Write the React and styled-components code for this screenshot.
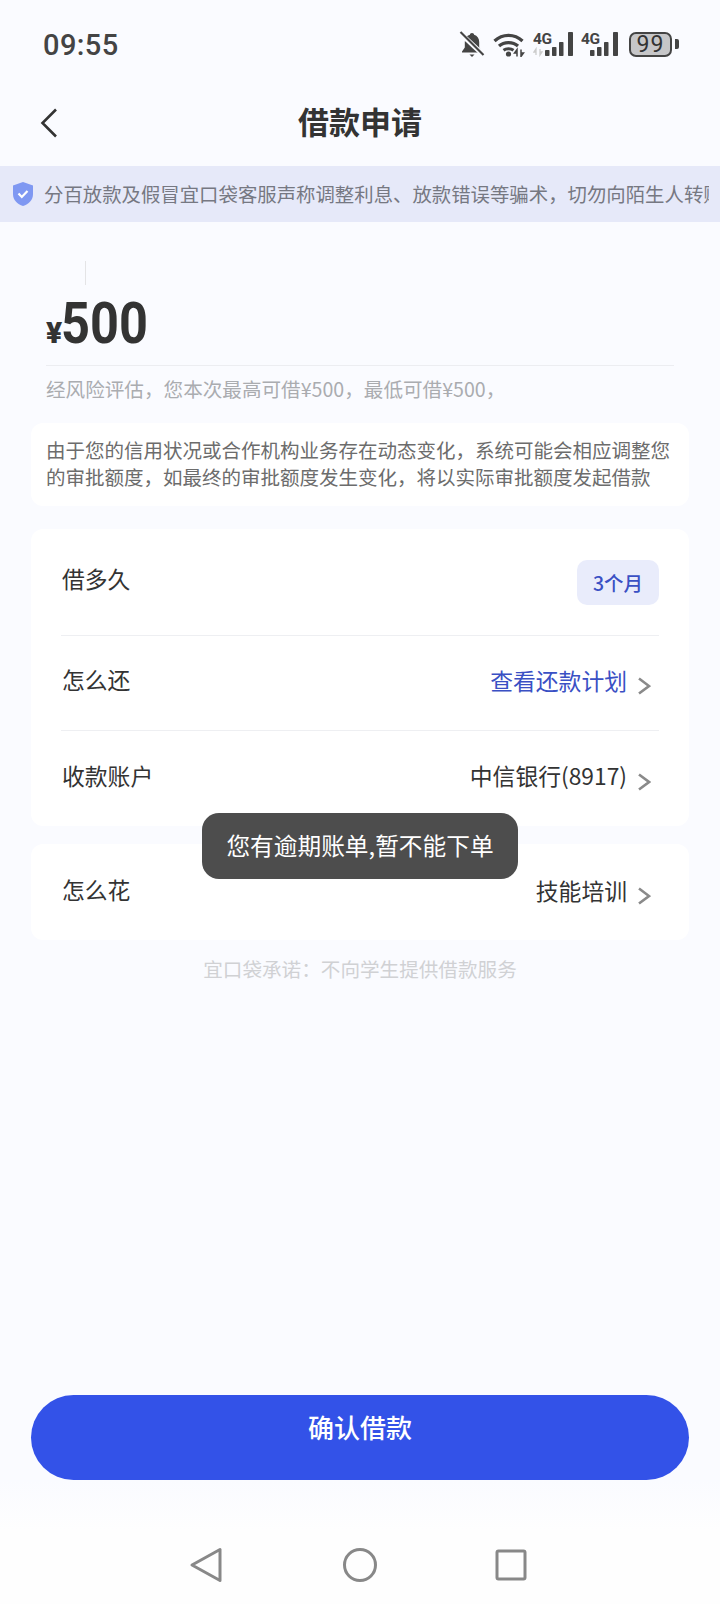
import styled, { createGlobalStyle } from "styled-components";

const GlobalStyle = createGlobalStyle`
  html, body {
    margin: 0;
    padding: 0;
    background: #fafbff;
  }
  * {
    box-sizing: border-box;
  }
`;

const Page = styled.div`
  position: relative;
  display: flex;
  flex-direction: column;
  width: 720px;
  height: 1604px;
  overflow: hidden;
  background: #fafbff;
  color: #333;
  font-family: "Noto Sans CJK SC", "Noto Sans", sans-serif;
`;

const StatusBar = styled.div`
  display: flex;
  align-items: center;
  justify-content: space-between;
  height: 88px;
  padding: 0 41px 0 43px;
`;

const Time = styled.span`
  margin-top: 2px;
  font-family: Roboto, sans-serif;
  font-size: 29px;
  font-weight: 500;
  letter-spacing: 0.4px;
  color: #444;
`;

const StatusIcons = styled.div`
  display: flex;
  align-items: center;
  gap: 8px;
`;

const Header = styled.div`
  position: relative;
  display: flex;
  align-items: center;
  justify-content: center;
  height: 70px;
  padding-bottom: 4px;
`;

const BackButton = styled.div`
  position: absolute;
  left: 40px;
  top: 20px;
  display: flex;
`;

const Title = styled.h1`
  margin: 0;
  font-size: 31px;
  line-height: 40px;
  font-weight: 700;
  color: #333;
`;

const Notice = styled.div`
  display: flex;
  align-items: center;
  height: 56px;
  margin-top: 8px;
  padding: 0 11px 0 13px;
  background: #e6e9f9;
`;

const NoticeClip = styled.div`
  flex: 1;
  min-width: 0;
  margin-left: 11px;
  overflow: hidden;
  white-space: nowrap;
  font-size: 19.4px;
  line-height: 26px;
  color: #767882;
`;

const AmountBlock = styled.div`
  padding: 39px 46px 0;
`;

const Cursor = styled.div`
  width: 1px;
  height: 24px;
  margin-left: 39px;
  background: #e4e4e6;
`;

const AmountRow = styled.div`
  display: flex;
  align-items: baseline;
  height: 81px;
  padding-top: 9px;
  border-bottom: 1px solid #ecedf1;
  font-family: Roboto, sans-serif;
  font-weight: 700;
  color: #333;
`;

const Currency = styled.span`
  font-size: 30px;
  line-height: 58px;
  font-weight: 900;
`;

const Amount = styled.span`
  display: inline-block;
  margin-left: -1px;
  font-size: 58px;
  line-height: 58px;
  transform: scaleX(0.87);
  transform-origin: left center;
`;

const Hint = styled.div`
  margin-top: 9px;
  font-size: 19.6px;
  line-height: 28px;
  color: #aaacb0;
`;

const Card = styled.div`
  margin: ${(p) => p.$margin || "0"};
  padding: ${(p) => p.$padding || "0 30px"};
  background: #fff;
  border-radius: 12px;
`;

const CardText = styled.div`
  font-size: 19.5px;
  line-height: 26.5px;
  color: #6c6c6c;
`;

const Row = styled.div`
  display: flex;
  align-items: center;
  justify-content: space-between;
  height: ${(p) => p.$height}px;
  padding-top: ${(p) => p.$nudge || 0}px;
  border-bottom: ${(p) => (p.$line ? "1px solid #eeeff2" : "none")};
`;

const Label = styled.span`
  margin: 0 0 6px 1px;
  font-size: 22.8px;
  line-height: 30px;
  color: #333;
`;

const Value = styled.div`
  display: flex;
  align-items: center;
  gap: 10px;
  padding-right: 8px;
  font-size: 22.8px;
  line-height: 30px;
  color: ${(p) => p.$color || "#333"};
`;

const ValueText = styled.span`
  margin-bottom: 5px;
`;

const ValueChevron = styled.svg`
  width: 14px;
  height: 18px;
  margin-top: 6px;
  fill: none;
  stroke: #8a8a8a;
  stroke-width: 2.6;
`;

const Tag = styled.div`
  display: flex;
  align-items: center;
  justify-content: center;
  width: 82px;
  height: 45px;
  border-radius: 10px;
  background: #e9ecfb;
  font-size: 19.5px;
  font-weight: 500;
  color: #3a50c4;
`;

const Toast = styled.div`
  position: absolute;
  left: 202px;
  top: 813px;
  width: 316px;
  height: 66px;
  padding-bottom: 2px;
  display: flex;
  align-items: center;
  justify-content: center;
  border-radius: 17px;
  background: #4d4d4d;
  font-size: 23.7px;
  color: #fff;
`;

const Promise = styled.div`
  margin-top: 15px;
  text-align: center;
  font-size: 19.6px;
  line-height: 28px;
  color: #d0d1d4;
`;

const ConfirmButton = styled.button`
  display: block;
  flex: none;
  width: 658px;
  height: 85px;
  margin: auto 31px 0;
  padding: 0 0 22px;
  border: none;
  border-radius: 43px;
  background: #3352e8;
  color: #fff;
  font-family: inherit;
  font-size: 26px;
  font-weight: 500;
`;

const NavBar = styled.div`
  display: flex;
  align-items: center;
  justify-content: space-between;
  height: 124px;
  padding: 46px 189px 0;
  background: linear-gradient(#fafbff, #fefefe 40%);
`;

const NavIcon = styled.svg`
  width: 38px;
  height: 38px;
  fill: none;
  stroke: #888;
  stroke-width: 3;
  stroke-linejoin: round;
`;

const BellOff = () => (
  <svg width="26" height="28" viewBox="0 0 26 28">
    <path
      d="M13 3c-1.3 0-2 .8-2.1 1.8C7.6 5.8 5.8 8.5 5.8 12v5.5L3 21.5v1h20v-1l-2.8-4V12c0-3.5-1.8-6.2-5.1-7.2C15 3.8 14.3 3 13 3z"
      fill="#444"
    />
    <path d="M10.5 24.5h5L13 27z" fill="#444" />
    <path d="M1.5 3.5l23 21.5" stroke="#fafbff" strokeWidth="5" />
    <path d="M1.5 2l23 23" stroke="#444" strokeWidth="2.2" />
  </svg>
);

const Wifi = () => (
  <svg width="32" height="25" viewBox="0 0 32 25" fill="none">
    <path d="M1.5 9c8-7.5 20-7.5 28 0" stroke="#444" strokeWidth="3.2" />
    <path d="M6 14c5-4.5 14-4.5 19 0" stroke="#444" strokeWidth="3.2" />
    <path d="M10.5 18.3c2.700-2 7.300-2 10 0" stroke="#444" strokeWidth="3" />
    <circle cx="15.5" cy="22" r="2.6" fill="#444" />
    <path d="M24 24.5v-7l-2.5 3.5H24M28 17.5v7l2.5-3.5H28" stroke="#444" strokeWidth="1.5" />
  </svg>
);

const Signal = ({ bars, weak, width }) => (
  <svg width={width} height="26" viewBox={`0 0 ${width} 26`}>
    <text x="0" y="13" fontFamily="Roboto, sans-serif" fontSize="15.5" fontWeight="700" letterSpacing="-0.5" fill="#444">
      4G
    </text>
    {weak && <path d="M3 24v-6l-2 3h2M7 18v6l2-3H7" stroke="#ccc" strokeWidth="1.3" fill="none" />}
    {bars.map(([x, h, w]) => (
      <rect key={x} x={x} y={25 - h} width={w} height={h} rx="0.8" fill="#444" />
    ))}
  </svg>
);

const Battery = styled.div`
  position: relative;
  display: flex;
  align-items: center;
  justify-content: center;
  width: 43px;
  height: 25px;
  margin-left: 3px;
  margin-right: 7px;
  border: 2px solid #444;
  border-radius: 7px;
  background: #c6c6c8;
  font-family: Roboto, sans-serif;
  font-size: 23px;
  letter-spacing: 1px;
  color: #333;
  &::after {
    content: "";
    position: absolute;
    right: -9px;
    top: 5px;
    width: 4px;
    height: 10px;
    border-radius: 0 2px 2px 0;
    background: #444;
  }
`;

const Chevron = () => (
  <ValueChevron viewBox="0 0 14 18">
    <path d="M2 1.5L12 9 2 16.5" />
  </ValueChevron>
);

export default function App() {
  return (
    <Page>
      <GlobalStyle />
      <StatusBar>
        <Time>09:55</Time>
        <StatusIcons>
          <BellOff />
          <Wifi />
          <Signal width={40} weak bars={[[12, 6, 4.5], [19, 9, 4.5], [26, 14, 4.5], [35, 24, 5]]} />
          <Signal width={37} bars={[[9, 6, 4.5], [16, 9, 4.5], [23, 14, 4.5], [32, 24, 5]]} />
          <Battery>99</Battery>
        </StatusIcons>
      </StatusBar>

      <Header>
        <BackButton>
          <svg width="18" height="30" viewBox="0 0 18 30" fill="none">
            <path d="M16 1.5L2.5 15 16 28.5" stroke="#333" strokeWidth="2.6" />
          </svg>
        </BackButton>
        <Title>借款申请</Title>
      </Header>

      <Notice>
        <svg width="20" height="24" viewBox="0 0 20 24">
          <path d="M10 0l10 3.5V12c0 6-4.2 10-10 12C4.2 22 0 18 0 12V3.5z" fill="#7f98f2" />
          <path d="M5.5 11.5l3.3 3.500 5.700-6" fill="none" stroke="#fff" strokeWidth="2.2" />
        </svg>
        <NoticeClip>分百放款及假冒宜口袋客服声称调整利息、放款错误等骗术，切勿向陌生人转账</NoticeClip>
      </Notice>

      <AmountBlock>
        <Cursor />
        <AmountRow>
          <Currency>¥</Currency>
          <Amount>500</Amount>
        </AmountRow>
        <Hint>经风险评估，您本次最高可借¥500，最低可借¥500，</Hint>
      </AmountBlock>

      <Card $margin="20px 31px 0" $padding="14px 15px 16px">
        <CardText>
          由于您的信用状况或合作机构业务存在动态变化，系统可能会相应调整您的审批额度，如最终的审批额度发生变化，将以实际审批额度发起借款
        </CardText>
      </Card>

      <Card $margin="23px 31px 0">
        <Row $height={107} $line>
          <Label>借多久</Label>
          <Tag>3个月</Tag>
        </Row>
        <Row $height={95} $line>
          <Label>怎么还</Label>
          <Value $color="#3a50c4">
            <ValueText>查看还款计划</ValueText>
            <Chevron />
          </Value>
        </Row>
        <Row $height={95}>
          <Label>收款账户</Label>
          <Value>
            <ValueText>中信银行(8917)</ValueText>
            <Chevron />
          </Value>
        </Row>
      </Card>

      <Card $margin="18px 31px 0">
        <Row $height={96} $nudge={2}>
          <Label>怎么花</Label>
          <Value>
            <ValueText>技能培训</ValueText>
            <Chevron />
          </Value>
        </Row>
      </Card>

      <Promise>宜口袋承诺：不向学生提供借款服务</Promise>

      <ConfirmButton>确认借款</ConfirmButton>

      <NavBar>
        <NavIcon viewBox="0 0 38 38">
          <path d="M31 3.5v31L3 19z" />
        </NavIcon>
        <NavIcon viewBox="0 0 38 38">
          <circle cx="19" cy="19" r="15.5" />
        </NavIcon>
        <NavIcon viewBox="0 0 38 38">
          <rect x="4" y="5" width="28" height="28" rx="1.5" />
        </NavIcon>
      </NavBar>

      <Toast>您有逾期账单,暂不能下单</Toast>
    </Page>
  );
}
